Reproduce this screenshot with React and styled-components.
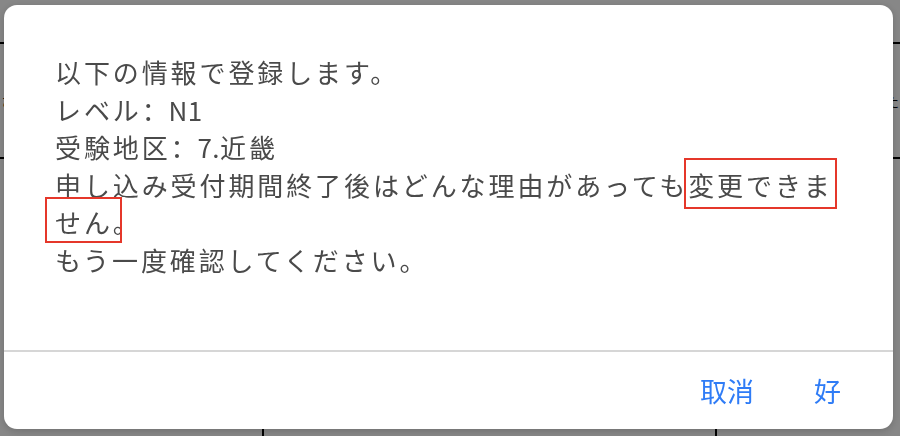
import React from "react";
import styled, { createGlobalStyle } from "styled-components";

const Global = createGlobalStyle`
  html, body { margin: 0; padding: 0; background: #ffffff; }
  body { font-family: "Noto Sans CJK SC", "Noto Sans", sans-serif; overflow: hidden; }
`;

const Page = styled.div`
  width: 900px;
  height: 436px;
  display: flex;
  flex-direction: column;
  color: #000;
  font-size: 14px;
`;

const PageRow = styled.div`
  height: ${(p) => p.$h}px;
  border-top: ${(p) => (p.$rule ? "2px solid #000" : "none")};
  display: flex;
  justify-content: space-between;
  align-items: center;
  padding: 0 1px;
`;

const PageCols = styled.div`
  flex: 1;
  display: grid;
  grid-template-columns: 262px 453px 1fr;
  & > div + div { border-left: 2px solid #000; }
`;

const Overlay = styled.div`
  position: fixed;
  inset: 0;
  background: rgba(0, 0, 0, 0.47);
  display: flex;
  align-items: flex-start;
  padding: 5px 7px 0 4px;
`;

const Dialog = styled.div`
  width: 889px;
  height: 424px;
  background: #ffffff;
  border-radius: 13px;
  display: flex;
  flex-direction: column;
  box-shadow: 0 2px 8px rgba(0, 0, 0, 0.18);
  overflow: hidden;
`;

const Body = styled.div`
  padding: 48px 46px 0 51px;
  height: 345px;
  box-sizing: border-box;
  color: #4a4a4a;
  font-family: "Noto Sans CJK SC", "Noto Sans CJK JP", sans-serif;
  font-size: 26px;
  letter-spacing: 2.9px;
  line-height: 37.6px;
`;

const Line = styled.div``;

const Latin = styled.span`
  letter-spacing: 0.4px;
  margin-left: -2px;
`;

const Mark = styled.span`
  position: relative;
  &::after {
    content: "";
    position: absolute;
    top: ${(p) => p.$t}px;
    bottom: ${(p) => p.$b}px;
    left: ${(p) => p.$l}px;
    right: ${(p) => p.$r}px;
    border: 2px solid #e5372a;
    pointer-events: none;
  }
`;

const Divider = styled.div`
  height: 2px;
  background: #d6d6d6;
`;

const Footer = styled.div`
  flex: 1;
  display: flex;
  justify-content: flex-end;
  align-items: center;
  gap: 60px;
  padding: 0 52px 0 0;
`;

const ActionButton = styled.button`
  border: none;
  background: none;
  padding: 0;
  margin: 0;
  font-family: "Noto Sans CJK SC", "Noto Sans", sans-serif;
  font-size: 27px;
  line-height: 32px;
  color: #2f7cf6;
  cursor: pointer;
`;

export default function App() {
  return (
    <>
      <Global />
      <Page>
        <PageRow $h={42} />
        <PageRow $h={113} $rule>
          <span>さ</span>
          <span>た</span>
        </PageRow>
        <PageRow $h={268} $rule>
          <span />
          <span />
        </PageRow>
        <PageCols>
          <div />
          <div />
          <div />
        </PageCols>
      </Page>
      <Overlay>
        <Dialog role="dialog">
          <Body>
            <Line>以下の情報で登録します。</Line>
            <Line>
              レベル：<Latin>N1</Latin>
            </Line>
            <Line>
              受験地区：<Latin>7.</Latin>近畿
            </Line>
            <Line>
              申し込み受付期間終了後はどんな理由があっても
              <Mark $t={-8} $b={-6} $l={-4} $r={-4}>変更できま</Mark>
              <Mark $t={-6} $b={-3} $l={-10} $r={20}>せん。</Mark>
            </Line>
            <Line>もう一度確認してください。</Line>
          </Body>
          <Divider />
          <Footer>
            <ActionButton>取消</ActionButton>
            <ActionButton>好</ActionButton>
          </Footer>
        </Dialog>
      </Overlay>
    </>
  );
}
